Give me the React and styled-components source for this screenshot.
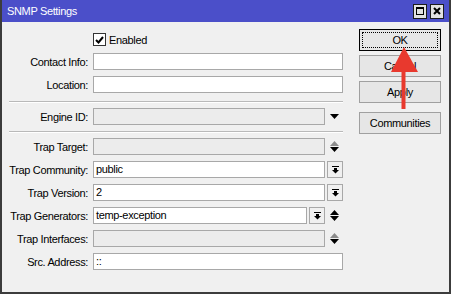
import React from 'react'
import styled, { createGlobalStyle } from 'styled-components'

const GlobalStyle = createGlobalStyle`
  html, body {
    margin: 0;
    padding: 0;
    background: #f0f0f0;
  }
  body {
    font-family: "Liberation Sans", Arial, sans-serif;
    font-size: 11px;
    letter-spacing: -0.35px;
    color: #000;
  }
`

const Window = styled.div`
  position: relative;
  width: 451px;
  height: 294px;
  box-sizing: border-box;
  border: 2px solid #3c3c3c;
  border-top: 0;
  background: #f0f0f0;
  display: flex;
  flex-direction: column;
`

const TitleBar = styled.div`
  height: 22px;
  background: #4b4fc9;
  display: flex;
  align-items: center;
  padding: 0 5px;
  color: #fff;
`

const TitleText = styled.span`
  font-size: 11px;
`

const TitleButtons = styled.div`
  margin-left: auto;
  display: flex;
  gap: 3px;
`

const TitleButton = styled.div`
  width: 14px;
  height: 15px;
  box-sizing: border-box;
  border: 1px solid #1c1c1c;
  background: #e2e2e2;
  display: flex;
  align-items: center;
  justify-content: center;
`

const Body = styled.div`
  flex: 1;
  display: flex;
`

const Form = styled.div`
  width: 341px;
  box-sizing: border-box;
  padding: 10px 0 0 7px;
  display: flex;
  flex-direction: column;
`

const Section = styled.div`
  display: flex;
  flex-direction: column;
  gap: 6px;
`

const Separator = styled.div`
  height: 0;
  border-top: 1px solid #b9b9b9;
  border-bottom: 1px solid #ffffff;
  margin: ${p => p.$top}px 0 5px;
`

const Row = styled.div`
  display: grid;
  grid-template-columns: 79px 250px;
  column-gap: 5px;
  align-items: center;
  height: ${p => p.$h || 17}px;
`

const Label = styled.div`
  text-align: right;
  white-space: nowrap;
`

const Field = styled.div`
  display: flex;
  align-items: center;
  height: 17px;
`

const Input = styled.div`
  flex: 1;
  height: 17px;
  box-sizing: border-box;
  border: 1px solid #a8a8a8;
  background: ${p => (p.$disabled ? '#ececec' : '#ffffff')};
  padding-left: 2px;
  line-height: 15px;
  white-space: nowrap;
  overflow: hidden;
`

const DropButton = styled.div`
  width: 16px;
  height: 17px;
  margin-left: 2px;
  box-sizing: border-box;
  border: 1px solid #a8a8a8;
  background: #f0f0f0;
  display: flex;
  align-items: center;
  justify-content: center;
`

const ArrowCell = styled.div`
  width: 18px;
  height: 17px;
  display: flex;
  align-items: center;
  justify-content: center;
`

const CheckWrap = styled.label`
  display: flex;
  align-items: center;
  gap: 3px;
`

const CheckBox = styled.div`
  width: 13px;
  height: 13px;
  box-sizing: border-box;
  border: 1px solid #333;
  background: #fff;
  display: flex;
  align-items: center;
  justify-content: center;
`

const Buttons = styled.div`
  margin-left: 16px;
  width: 82px;
  padding-top: 7px;
  display: flex;
  flex-direction: column;
  gap: 4px;
`

const Button = styled.div`
  height: 22px;
  box-sizing: border-box;
  border: 1px solid ${p => (p.$focus ? '#000' : '#a0a0a0')};
  background: #e6e6e6;
  display: flex;
  align-items: center;
  justify-content: center;
  position: relative;
  margin-top: ${p => p.$gap || 0}px;
  &::after {
    content: '';
    display: ${p => (p.$focus ? 'block' : 'none')};
    position: absolute;
    inset: 2px;
    border: 1px dotted #000;
  }
`

const Annotation = styled.svg`
  position: absolute;
  left: 388px;
  top: 46px;
  pointer-events: none;
`

const DropIcon = () => (
  <svg width="7" height="8" viewBox="0 0 7 8">
    <rect x="0" y="0" width="7" height="1" fill="#000" />
    <rect x="2" y="2" width="3" height="2" fill="#000" />
    <polygon points="0,4 7,4 3.5,7.5" fill="#000" />
  </svg>
)

const DownArrow = () => (
  <svg width="9" height="5" viewBox="0 0 9 5">
    <polygon points="0,0 9,0 4.5,5" fill="#000" />
  </svg>
)

const UpDown = ({ disabled }) => (
  <svg width="9" height="11" viewBox="0 0 9 11">
    <polygon points="4.5,0 9,5 0,5" fill={disabled ? '#8c8c8c' : '#000'} />
    <polygon points="0,6 9,6 4.5,11" fill="#000" />
  </svg>
)

const FormRow = ({ label, value, disabled, drop, arrows, down }) => (
  <Row>
    <Label>{label}</Label>
    <Field>
      <Input $disabled={disabled}>{value}</Input>
      {drop && (
        <DropButton>
          <DropIcon />
        </DropButton>
      )}
      {arrows && (
        <ArrowCell>
          <UpDown disabled={arrows === 'disabled'} />
        </ArrowCell>
      )}
      {down && (
        <ArrowCell>
          <DownArrow />
        </ArrowCell>
      )}
    </Field>
  </Row>
)

const App = () => {
  return (
    <Window>
      <GlobalStyle />
      <TitleBar>
        <TitleText>SNMP Settings</TitleText>
        <TitleButtons>
          <TitleButton>
            <svg width="8" height="8" viewBox="0 0 8 8">
              <rect x="0.5" y="0.5" width="7" height="7" fill="none" stroke="#000" />
              <rect x="0" y="0" width="8" height="2" fill="#000" />
            </svg>
          </TitleButton>
          <TitleButton>
            <svg width="8" height="8" viewBox="0 0 8 8">
              <path d="M1 1 L7 7 M7 1 L1 7" stroke="#000" strokeWidth="2" />
            </svg>
          </TitleButton>
        </TitleButtons>
      </TitleBar>
      <Body>
        <Form>
          <Section>
            <Row $h={15}>
              <span />
              <CheckWrap>
                <CheckBox>
                  <svg width="9" height="8" viewBox="0 0 9 8">
                    <path d="M1 4 L3.5 6.5 L8 1" fill="none" stroke="#000" strokeWidth="2" />
                  </svg>
                </CheckBox>
                Enabled
              </CheckWrap>
            </Row>
            <FormRow label="Contact Info:" />
            <FormRow label="Location:" />
          </Section>
          <Separator $top={8} />
          <Section>
            <FormRow label="Engine ID:" disabled down />
          </Section>
          <Separator $top={6} />
          <Section>
            <FormRow label="Trap Target:" disabled arrows="disabled" />
            <FormRow label="Trap Community:" value="public" drop />
            <FormRow label="Trap Version:" value="2" drop />
            <FormRow label="Trap Generators:" value="temp-exception" drop arrows="enabled" />
            <FormRow label="Trap Interfaces:" disabled arrows="disabled" />
            <FormRow label="Src. Address:" value="::" />
          </Section>
        </Form>
        <Buttons>
          <Button $focus>OK</Button>
          <Button>Cancel</Button>
          <Button>Apply</Button>
          <Button $gap={5}>Communities</Button>
        </Buttons>
      </Body>
      <Annotation width="30" height="64" viewBox="0 0 30 64">
        <polygon points="14,1 28,26 1,26" fill="#e8392e" />
        <rect x="11.5" y="25" width="4" height="38" fill="#e8392e" />
      </Annotation>
    </Window>
  )
}

export default App
